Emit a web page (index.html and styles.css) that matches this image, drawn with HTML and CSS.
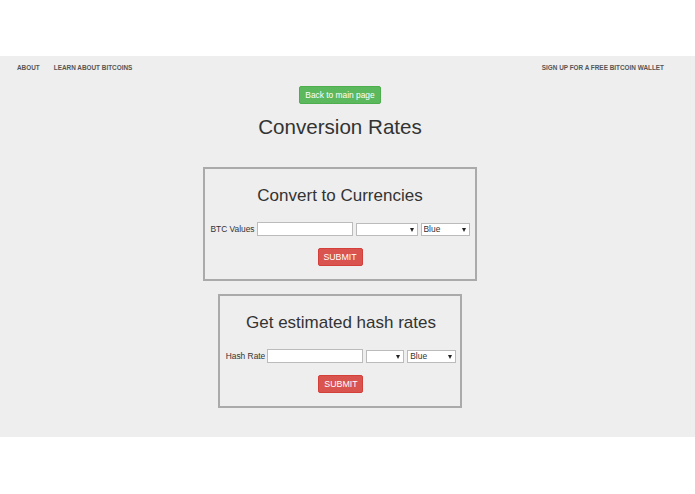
FILE: index.html
```html
<!DOCTYPE html>
<html>
<head>
<meta charset="utf-8">
<link rel="stylesheet" href="styles.css">
</head>
<body>
<div class="top-space"></div>
<div class="page">
  <nav class="nav">
    <div class="nav-left">
      <a class="nav-link">ABOUT</a>
      <a class="nav-link">LEARN ABOUT BITCOINS</a>
    </div>
    <a class="nav-link">SIGN UP FOR A FREE BITCOIN WALLET</a>
  </nav>
  <div class="center">
    <button class="btn-green">Back to main page</button>
    <h1 class="title">Conversion Rates</h1>
    <div class="box">
      <h2 class="box-title">Convert to Currencies</h2>
      <div class="row">
        <label class="label">BTC Values</label>
        <input class="text-in" type="text">
        <span class="sel-wrap sel-a"><select class="sel"><option></option></select></span>
        <span class="sel-wrap sel-b"><select class="sel"><option>Blue</option></select></span>
      </div>
      <button class="btn-red">SUBMIT</button>
    </div>
    <div class="box box2">
      <h2 class="box-title">Get estimated hash rates</h2>
      <div class="row">
        <label class="label">Hash Rate</label>
        <input class="text-in" type="text">
        <span class="sel-wrap sel-c"><select class="sel"><option></option></select></span>
        <span class="sel-wrap sel-b"><select class="sel"><option>Blue</option></select></span>
      </div>
      <button class="btn-red">SUBMIT</button>
    </div>
  </div>
</div>
</body>
</html>
```

FILE: styles.css
```css
html, body {
  margin: 0;
  padding: 0;
  background: #ffffff;
  font-family: "Liberation Sans", Arial, sans-serif;
}
.top-space {
  height: 56px;
}
.page {
  background: #eeeeee;
  height: 381px;
}
.nav {
  display: flex;
  justify-content: space-between;
  align-items: center;
  height: 22px;
  padding: 0 31px 0 17px;
}
.nav-left {
  display: flex;
  gap: 14px;
}
.nav-link {
  font-size: 6.4px;
  font-weight: bold;
  color: #555555;
  text-decoration: none;
}
.center {
  display: flex;
  flex-direction: column;
  align-items: center;
  padding-right: 15px;
}
.btn-green {
  margin-top: 8px;
  width: 82px;
  height: 18px;
  background: #5cb85c;
  border: 1px solid #4cae4c;
  border-radius: 2px;
  color: #ffffff;
  font-family: "Liberation Sans", Arial, sans-serif;
  font-size: 8.4px;
  padding: 0;
}
.title {
  margin: 11px 0 28px;
  font-size: 20.6px;
  line-height: 24px;
  font-weight: normal;
  color: #333333;
}
.box {
  border: 2px solid #aaaaaa;
  padding: 17px 5px 13px;
  display: flex;
  flex-direction: column;
  align-items: center;
}
.box2 {
  margin-top: 13px;
  padding-left: 6px;
  padding-right: 4px;
}
.box-title {
  margin: 0 0 16px;
  font-size: 17px;
  line-height: 20px;
  font-weight: normal;
  color: #333333;
}
.row {
  display: flex;
  align-items: center;
  height: 14px;
  margin-bottom: 12px;
}
.label {
  font-size: 8.4px;
  color: #333333;
  margin-right: 2px;
}
.text-in {
  box-sizing: border-box;
  width: 96px;
  height: 14px;
  border: 1px solid #bbbbbb;
  background: #ffffff;
  padding: 0;
  margin: 0 3px 0 0;
}
.sel-wrap {
  position: relative;
  display: inline-block;
  height: 13px;
  margin-right: 3px;
}
.sel-wrap:last-child {
  margin-right: 0;
}
.sel-a { width: 62px; }
.sel-b { width: 49px; }
.sel-c { width: 38px; }
.sel {
  -webkit-appearance: none;
  appearance: none;
  box-sizing: border-box;
  width: 100%;
  height: 13px;
  border: 1px solid #bbbbbb;
  background: #ffffff;
  font-family: "Liberation Sans", Arial, sans-serif;
  font-size: 8.4px;
  color: #333333;
  padding: 0 0 0 2px;
  margin: 0;
  display: block;
}
.sel-wrap::after {
  content: "";
  position: absolute;
  right: 4px;
  top: 5px;
  border-left: 2.5px solid transparent;
  border-right: 2.5px solid transparent;
  border-top: 4px solid #222222;
}
.btn-red {
  width: 45px;
  height: 18px;
  background: #d9534f;
  border: 1px solid #d43f3a;
  border-radius: 2px;
  color: #ffffff;
  font-family: "Liberation Sans", Arial, sans-serif;
  font-size: 8.8px;
  padding: 0;
}
```
